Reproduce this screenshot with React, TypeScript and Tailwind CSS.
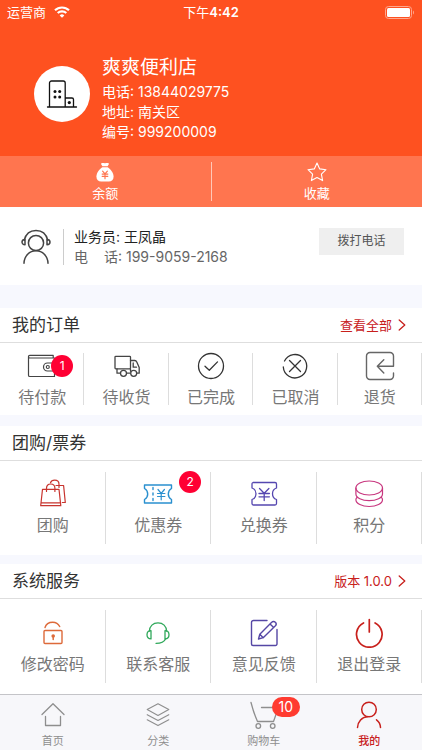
import type { ReactNode } from "react";

const line = {
  fill: "none",
  stroke: "currentColor",
  strokeLinecap: "round" as const,
  strokeLinejoin: "round" as const,
  "aria-hidden": true,
};

function WifiIcon() {
  return (
    <svg width="16" height="12" viewBox="0 0 16 12" fill="none" stroke="#fff" strokeWidth="2.1" aria-hidden="true">
      <path d="M1 4.3a10 10 0 0 1 14 0" />
      <path d="M3.7 7.1a6.2 6.2 0 0 1 8.6 0" />
      <path d="M8 11.8 5.7 9.4a3.3 3.3 0 0 1 4.6 0z" fill="#fff" stroke="none" />
    </svg>
  );
}

function BatteryIcon() {
  return (
    <svg width="30" height="13" viewBox="0 0 30 13" fill="none" aria-hidden="true">
      <rect x="0.5" y="0.5" width="26" height="12" rx="3" stroke="#ffa78e" />
      <rect x="2" y="2" width="23" height="9" rx="1.5" fill="#fff" />
      <path d="M28 4.5c1.3.6 1.3 3.4 0 4z" fill="#ffa78e" />
    </svg>
  );
}

function BuildingIcon() {
  return (
    <svg width="32" height="30" viewBox="0 0 32 30" {...line} stroke="#111" strokeWidth="1.3">
      <path d="M1.500 28h29M3.500 28V4a2 2 0 0 1 2-2h11.700a2 2 0 0 1 2 2v24M19.200 19H26a1.500 1.500 0 0 1 1.500 1.500V28" />
      <g fill="#111" stroke="none">
        <circle cx="9" cy="12.500" r="1.500" />
        <circle cx="13.700" cy="12.500" r="1.500" />
        <circle cx="9" cy="18" r="1.500" />
        <circle cx="13.700" cy="18" r="1.500" />
        <circle cx="23.300" cy="23.600" r="1.600" />
      </g>
    </svg>
  );
}

function MoneyBagIcon() {
  return (
    <svg width="20" height="22" viewBox="0 0 20 22" {...line}>
      <path d="M6 1.500c1-.9 2.400-.3 4-.3s3-.6 4 .3c.4.900-.8 1.900-1.300 2.900H7.300C6.800 3.400 5.600 2.400 6 1.500z" fill="#fff" stroke="none" />
      <path d="M7.200 5.500h5.600c3 1.700 6.200 6 6.200 9.700 0 3.500-2 5.300-5 5.300H6c-3 0-5-1.800-5-5.300 0-3.700 3.200-8 6.200-9.700z" fill="#fff" stroke="none" />
      <path d="M7.500 9.500 10 12.500l2.500-3M7 12.700h6M7 15h6M10 12.500V17.500" stroke="#ff754f" strokeWidth="1.200" />
    </svg>
  );
}

function StarIcon() {
  return (
    <svg width="20" height="20" viewBox="0 0 20 20" {...line} stroke="#fff" strokeWidth="1.100">
      <path d="m10 1 2.700 5.900 6.300.800-4.600 4.400 1.200 6.500L10 15.500l-5.600 3.100 1.200-6.500L1 7.700l6.300-.8z" />
    </svg>
  );
}

function AgentIcon() {
  return (
    <svg width="30" height="36" viewBox="0 0 30 36" {...line} strokeWidth="1.500">
      <circle cx="15" cy="14" r="7.600" />
      <path d="M3 34.200C3.300 27 8.500 21.800 15 21.800S26.700 27 27 34.200" />
      <path d="M3.200 11.200C4.800 5 9.400 1.500 15 1.500S25.200 5 26.800 11.200" />
      <path d="M4 10.500v5.200c-1.800 0-3-1.100-3-2.600s1.200-2.600 3-2.600zM26 10.500v5.200c1.800 0 3-1.100 3-2.600s-1.200-2.600-3-2.600z" />
    </svg>
  );
}

function ChevronIcon() {
  return (
    <svg width="8" height="12" viewBox="0 0 8 12" {...line} strokeWidth="1.300">
      <path d="m1.200 1 5.600 5-5.600 5" />
    </svg>
  );
}

function WalletIcon() {
  return (
    <svg width="30" height="30" viewBox="0 0 30 30" {...line} strokeWidth="1.200">
      <path d="M27.500 9V7H2.800a1.300 1.300 0 0 1 0-2.700h23.400v2.500M1.500 5.600v18.600a1.300 1.300 0 0 0 1.300 1.300h24.700V20" />
      <path d="M28 12h-7.500a4 4 0 0 0 0 8H28z" />
      <circle cx="20.800" cy="16" r="1.500" />
    </svg>
  );
}

function TruckIcon() {
  return (
    <svg width="30" height="30" viewBox="0 0 30 30" {...line} strokeWidth="1.300">
      <rect x="3" y="5.300" width="15.500" height="12.500" rx=".8" />
      <path d="M18.500 9.500h4.200c1.200 0 1.700.6 2.200 1.700l2.300 5.200v5.800h-2.500M5 17.800v4.400h3.200M14.800 22.200h3.400M18.500 17.800v2.500" />
      <path d="M21.200 12v4.200h3.300" />
      <circle cx="11.500" cy="22.300" r="3" />
      <circle cx="21.700" cy="22.300" r="3" />
    </svg>
  );
}

function DoneIcon() {
  return (
    <svg width="30" height="30" viewBox="0 0 30 30" {...line} strokeWidth="1.300">
      <circle cx="15" cy="15" r="12.500" />
      <path d="m9 15.200 4.300 4.100 8.200-8.400" />
    </svg>
  );
}

function CancelIcon() {
  return (
    <svg width="30" height="30" viewBox="0 0 30 30" {...line} strokeWidth="1.300">
      <path d="M4.500 10A11.700 11.700 0 1 1 3.300 16M9.500 9.500l11 11M20.500 9.500l-11 11" />
    </svg>
  );
}

function ReturnIcon() {
  return (
    <svg width="30" height="30" viewBox="0 0 30 30" {...line} strokeWidth="1.400">
      <path d="M28.500 15.300V5a3.500 3.500 0 0 0-3.500-3.500H5A3.500 3.500 0 0 0 1.500 5v20A3.500 3.500 0 0 0 5 28.500h20a3.500 3.500 0 0 0 3.500-3.500v-3M28.500 15.300H12.300M18.800 8.700l-6.500 6.600 6.500 6.700" />
    </svg>
  );
}

function BagsIcon() {
  return (
    <svg width="30" height="30" viewBox="0 0 30 30" {...line} strokeWidth="1.200">
      <path d="M4.500 10.300H21l1.800 16.400H2.700zM3.200 23.800h19.200M8.500 12.500V9.200C8.500 6.500 10.300 5 12.700 5s4.200 1.500 4.200 4.200v3.300" />
      <path d="M12.500 3.800C13 2.200 14.600 1.200 16.700 1.200c2.700 0 4.300 1.500 4.300 4v3.300M18 6.500h7.600l1.700 17h-3" />
    </svg>
  );
}

function CouponIcon() {
  return (
    <svg width="30" height="30" viewBox="0 0 30 30" {...line} strokeWidth="1.400">
      <path d="M1.500 6h27v3.500c-2.200 1.200-3.200 3.300-3.200 5.500s1 4.300 3.200 5.500V24h-27v-3.500c2.200-1.200 3.200-3.300 3.200-5.500s-1-4.300-3.200-5.500z" />
      <path d="M10 8.500v2M10 14v2M10 19.500v2" />
      <path d="m15 10.500 3.200 3.800 3.200-3.800M14.500 14.500h7.400M14.500 17.500h7.400M18.200 14.300v6.500" strokeWidth="1.200" />
    </svg>
  );
}

function VoucherIcon() {
  return (
    <svg width="30" height="30" viewBox="0 0 30 30" {...line} strokeWidth="1.300">
      <path d="M4 3.500h22a1.500 1.500 0 0 1 1.500 1.500v4c-2.800 1-4 3.300-4 5.700s1.200 4.800 4 5.800v4a1.500 1.500 0 0 1-1.500 1.500H4.500A1.500 1.500 0 0 1 3 24.500v-4c2.800-1 4-3.400 4-5.800S5.800 10 3 9V5a1.500 1.500 0 0 1 1-1.500z" />
      <path d="m10.500 9.500 4.700 4.700 4.700-4.700M10 14.500h10.400M10 17.800h10.400M15.200 14.200v7.300" />
    </svg>
  );
}

function CoinsIcon() {
  return (
    <svg width="30" height="30" viewBox="0 0 30 30" {...line} strokeWidth="1.200">
      <ellipse cx="15.200" cy="9" rx="13.300" ry="7" />
      <path d="M1.900 9v5.900c0 3.800 6 6.800 13.300 6.800s13.300-3 13.300-6.800V9" />
      <path d="M3 18.300c-.7.700-1.100 1.500-1.100 2.400 0 3.800 6 6.800 13.300 6.800s13.300-3 13.300-6.800c0-.9-.4-1.700-1.100-2.400" />
    </svg>
  );
}

function LockIcon() {
  return (
    <svg width="30" height="30" viewBox="0 0 30 30" {...line} strokeWidth="1.400">
      <rect x="6" y="12.500" width="18" height="13" rx="1" />
      <path d="M7 9.500C8 6 11 4.200 14.700 4.200c3.200 0 5.600 1.500 7 4.300" />
      <path d="M15.200 19.500v2" strokeWidth="1.500" />
      <circle cx="15.200" cy="18" r="1.800" fill="currentColor" stroke="none" />
    </svg>
  );
}

function HeadsetIcon() {
  return (
    <svg width="30" height="30" viewBox="0 0 30 30" {...line} strokeWidth="1.300">
      <path d="M6.500 13C6.500 8.200 10 4.800 15 4.800s8.500 3.400 8.500 8.200" />
      <path d="M8 12.700v8.200c-2.600 0-4-1.700-4-4.100s1.400-4.100 4-4.100zM22 12.700v8.200c2.600 0 4-1.700 4-4.100s-1.400-4.100-4-4.100z" />
      <path d="M22.500 21c-1.200 2.800-3.900 4.300-9.500 4.300" />
    </svg>
  );
}

function EditIcon() {
  return (
    <svg width="30" height="30" viewBox="0 0 30 30" {...line} strokeWidth="1.400">
      <path d="M18 2.500H4.500a2 2 0 0 0-2 2v21.500a1.500 1.500 0 0 0 1.500 1.500h22.500a1.500 1.500 0 0 0 1.500-1.500V11.500" />
      <path d="M10.800 16.200 22.700 4.300a2.500 2.500 0 0 1 3.700 3.500L14.200 19.700l-4.700 1.300zM21 6l3.700 3.600M10.800 16.200l3.400 3.500" />
    </svg>
  );
}

function PowerIcon() {
  return (
    <svg width="30" height="30" viewBox="0 0 30 30" {...line} strokeWidth="1.700">
      <path d="M15.300 1.500V14M9.500 5a12.800 12.800 0 1 0 11.600 0" />
    </svg>
  );
}

function HomeIcon() {
  return (
    <svg width="28" height="28" viewBox="0 0 28 28" {...line} strokeWidth="1.300">
      <path d="M3 13.500 14 2.800l11 10.700M6.500 15.500v9h15v-9" />
    </svg>
  );
}

function LayersIcon() {
  return (
    <svg width="28" height="28" viewBox="0 0 28 28" {...line} strokeWidth="1.100">
      <path d="m14 2.800 10.800 5.800L14 14.400 3.200 8.600zM3.200 13.700 14 19.500l10.800-5.800M3.200 18.800 14 24.600l10.800-5.800" />
    </svg>
  );
}

function CartIcon() {
  return (
    <svg width="28" height="28" viewBox="0 0 28 28" {...line} strokeWidth="1.300">
      <path d="M1 1.500c1.700 6.800 3.800 13 6.500 19h16l5-14H11.500" />
      <circle cx="8.300" cy="25" r="2.300" />
      <circle cx="22.700" cy="25" r="2.300" />
    </svg>
  );
}

function PersonIcon() {
  return (
    <svg width="28" height="28" viewBox="0 0 28 28" {...line} strokeWidth="1.500">
      <circle cx="14" cy="8.500" r="7.300" />
      <path d="M2.500 26.500C2.800 20.500 7 16 12.500 15.800M21.500 18.800c2.400 1.800 3.900 4.400 4 7.700" />
    </svg>
  );
}

type Item = { label: string; icon: ReactNode; color: string; badge?: string };

const orders: Item[] = [
  { label: "待付款", icon: <WalletIcon />, color: "text-[#444444]", badge: "1" },
  { label: "待收货", icon: <TruckIcon />, color: "text-[#444444]" },
  { label: "已完成", icon: <DoneIcon />, color: "text-[#333333]" },
  { label: "已取消", icon: <CancelIcon />, color: "text-[#333333]" },
  { label: "退货", icon: <ReturnIcon />, color: "text-[#666666]" },
];

const deals: Item[] = [
  { label: "团购", icon: <BagsIcon />, color: "text-[#c8342e]" },
  { label: "优惠券", icon: <CouponIcon />, color: "text-[#2a90cf]", badge: "2" },
  { label: "兑换券", icon: <VoucherIcon />, color: "text-[#5547b0]" },
  { label: "积分", icon: <CoinsIcon />, color: "text-[#c8377f]" },
];

const services: Item[] = [
  { label: "修改密码", icon: <LockIcon />, color: "text-[#dd6a3a]" },
  { label: "联系客服", icon: <HeadsetIcon />, color: "text-[#2fa85a]" },
  { label: "意见反馈", icon: <EditIcon />, color: "text-[#5547a5]" },
  { label: "退出登录", icon: <PowerIcon />, color: "text-[#c8201c]" },
];

function SectionHeader({ title, action }: { title: string; action?: string }) {
  return (
    <div className="flex h-[35px] items-center justify-between border-b border-[#dedede] pr-4 pl-3">
      <h2 className="text-[17px] leading-6 text-[#333333]">{title}</h2>
      {action && (
        <a href="#" className="flex items-center gap-1.5 text-[13px] leading-5 text-[#c8201c]">
          {action}
          <ChevronIcon />
        </a>
      )}
    </div>
  );
}

function OrderCell({ item }: { item: Item }) {
  return (
    <button type="button" className="flex flex-1 flex-col items-center gap-1 border-r border-[#dddddd] pl-px">
      <span className={`relative -mt-0.5 ${item.color}`}>
        {item.icon}
        {item.badge && (
          <span className="absolute top-1 left-6 flex size-[22px] items-center justify-center rounded-full bg-[#ff0033] text-xs text-white">
            {item.badge}
          </span>
        )}
      </span>
      <span className="-mb-2 text-base leading-6 text-[#777777]">{item.label}</span>
    </button>
  );
}

function GridCell({ item }: { item: Item }) {
  return (
    <button type="button" className="flex flex-1 flex-col items-center justify-center gap-1 border-r border-[#dddddd] pl-px">
      <span className={`relative ${item.color}`}>
        {item.icon}
        {item.badge && (
          <span className="absolute -top-2 left-9 flex size-[22px] items-center justify-center rounded-full bg-[#ff0033] text-xs text-white">
            {item.badge}
          </span>
        )}
      </span>
      <span className="text-base leading-6 text-[#777777]">{item.label}</span>
    </button>
  );
}

function Tab({ label, icon, active, badge }: { label: string; icon: ReactNode; active?: boolean; badge?: string }) {
  return (
    <a
      href="#"
      aria-current={active ? "page" : undefined}
      className={`flex flex-1 flex-col items-center gap-1 pt-1.5 ${active ? "font-medium text-[#c8201c]" : "text-[#8e8e8e]"}`}
    >
      <span className="relative">
        {icon}
        {badge && (
          <span className="absolute -top-1 left-[22px] flex h-5 w-7 items-center justify-center rounded-full bg-[#ff3b30] text-sm font-normal text-white">
            {badge}
          </span>
        )}
      </span>
      <span className="text-[11px] leading-4">{label}</span>
    </a>
  );
}

export default function App() {
  return (
    <div className="flex min-h-screen flex-col bg-[#f7f8fe] font-[Inter,'Noto_Sans_CJK_SC',sans-serif]">
      <header className="bg-[#fe5120] text-white">
        <div className="grid h-6 grid-cols-3 items-center px-[7px] text-[13px] leading-5">
          <div className="flex items-center gap-2">
            <span>运营商</span>
            <WifiIcon />
          </div>
          <div className="text-center">
            下午<span className="font-semibold">4:42</span>
          </div>
          <div className="flex justify-end">
            <BatteryIcon />
          </div>
        </div>
        <div className="flex gap-3 pt-[30px] pb-3.5 pl-[34px]">
          <div className="mt-3 flex size-14 items-center justify-center rounded-full bg-white">
            <BuildingIcon />
          </div>
          <div className="text-sm leading-5">
            <h1 className="text-[19px] leading-7">爽爽便利店</h1>
            <p>电话: 13844029775</p>
            <p>地址: 南关区</p>
            <p>编号: 999200009</p>
          </div>
        </div>
        <div className="flex h-[51px] bg-[#ff754f] py-1.5 text-[13px] leading-5">
          <button type="button" className="flex flex-1 flex-col items-center justify-between border-r border-[#ffc8b8]">
            <MoneyBagIcon />
            <span className="-mb-0.5">余额</span>
          </button>
          <button type="button" className="flex flex-1 flex-col items-center justify-between">
            <StarIcon />
            <span className="-mb-0.5">收藏</span>
          </button>
        </div>
      </header>

      <section className="flex h-[78px] items-center bg-white pt-0.5 pr-[18px] pl-[21px]">
        <div className="text-[#444444]">
          <AgentIcon />
        </div>
        <div className="ml-3 h-9 border-l border-[#cccccc]" />
        <div className="ml-2.5 flex-1 text-sm leading-5">
          <p className="text-[#222222]">业务员: 王凤晶</p>
          <p className="flex text-[#666666]">
            <span className="mr-4">电</span>
            <span>话: 199-9059-2168</span>
          </p>
        </div>
        <button type="button" className="mb-3 h-[27px] w-[85px] bg-[#efefef] text-xs text-[#555555]">
          拨打电话
        </button>
      </section>

      <section className="mt-[23px] bg-white">
        <SectionHeader title="我的订单" action="查看全部" />
        <div className="flex h-[72px] py-2.5">
          {orders.map((item) => (
            <OrderCell key={item.label} item={item} />
          ))}
        </div>
      </section>

      <section className="mt-[11px] bg-white">
        <SectionHeader title="团购/票券" />
        <div className="flex h-[94px] py-[11px]">
          {deals.map((item) => (
            <GridCell key={item.label} item={item} />
          ))}
        </div>
      </section>

      <section className="mt-[9px] bg-white">
        <SectionHeader title="系统服务" action="版本 1.0.0" />
        <div className="flex h-[95px] py-[11px]">
          {services.map((item) => (
            <GridCell key={item.label} item={item} />
          ))}
        </div>
      </section>

      <nav className="mt-auto flex h-14 border-t border-[#c4c4c8] bg-[#f7f7fa]">
        <Tab label="首页" icon={<HomeIcon />} />
        <Tab label="分类" icon={<LayersIcon />} />
        <Tab label="购物车" icon={<CartIcon />} badge="10" />
        <Tab label="我的" icon={<PersonIcon />} active />
      </nav>
    </div>
  );
}
